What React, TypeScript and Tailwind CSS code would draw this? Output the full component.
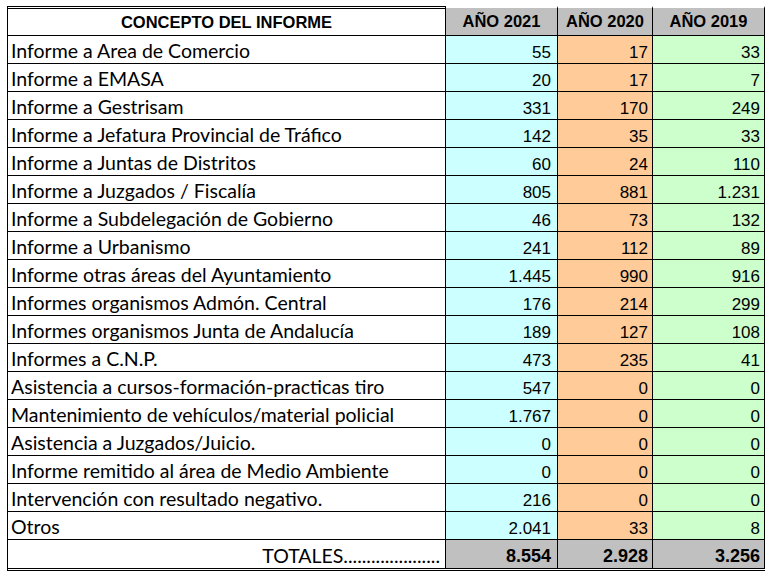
const rows: [string, string, string, string][] = [
  ['Informe a Area de Comercio', '55', '17', '33'],
  ['Informe a EMASA', '20', '17', '7'],
  ['Informe a Gestrisam', '331', '170', '249'],
  ['Informe a Jefatura Provincial de Tráfico', '142', '35', '33'],
  ['Informe a Juntas de Distritos', '60', '24', '110'],
  ['Informe a Juzgados / Fiscalía', '805', '881', '1.231'],
  ['Informe a Subdelegación de Gobierno', '46', '73', '132'],
  ['Informe a Urbanismo', '241', '112', '89'],
  ['Informe otras áreas del Ayuntamiento', '1.445', '990', '916'],
  ['Informes organismos Admón. Central', '176', '214', '299'],
  ['Informes organismos Junta de Andalucía', '189', '127', '108'],
  ['Informes a C.N.P.', '473', '235', '41'],
  ['Asistencia a cursos-formación-practicas tiro', '547', '0', '0'],
  ['Mantenimiento de vehículos/material policial', '1.767', '0', '0'],
  ['Asistencia a Juzgados/Juicio.', '0', '0', '0'],
  ['Informe remitido al área de Medio Ambiente', '0', '0', '0'],
  ['Intervención con resultado negativo.', '216', '0', '0'],
  ['Otros', '2.041', '33', '8'],
]

const arial = "font-['Liberation_Sans',Arial,sans-serif]"
const calibri = "font-['Lato','Noto_Sans',sans-serif]"

export default function App() {
  return (
    <div className="bg-white w-[773px] h-[580px] pl-[7px] pt-[6px] text-black">
      <div className="w-[758px] border-l border-black border-b-[3px] border-double">
        {/* header */}
        <div className={`grid grid-cols-[438px_112px_95px_112px] h-[30px] ${arial} font-bold text-[16.5px]`}>
          <div className="border-t-[3px] border-double border-black border-b border-r flex items-center justify-center">
            CONCEPTO DEL INFORME
          </div>
          <div className="border-t-2 border-t-white bg-[#c0c0c0] border-b border-r border-b-black border-r-black flex items-center justify-center">AÑO 2021</div>
          <div className="border-t-2 border-t-white bg-[#c0c0c0] border-b border-r border-b-black border-r-black flex items-center justify-center">AÑO 2020</div>
          <div className="border-t-2 border-t-white bg-[#c0c0c0] border-b border-r border-b-black border-r-black flex items-center justify-center">AÑO 2019</div>
        </div>

        {rows.map(([label, a, b, c]) => (
          <div key={label} className="grid grid-cols-[438px_112px_95px_112px] h-[28px]">
            <div className={`border-b border-r border-black flex items-end pl-[3px] pb-[3px] leading-none text-[19.5px] whitespace-nowrap ${calibri}`}>
              {label}
            </div>
            <div className={`bg-[#ccffff] border-b border-r border-black flex items-end justify-end pr-[6px] pb-[2px] leading-none text-[17px] ${arial}`}>{a}</div>
            <div className={`bg-[#ffcc99] border-b border-r border-black flex items-end justify-end pr-[4px] pb-[2px] leading-none text-[17px] ${arial}`}>{b}</div>
            <div className={`bg-[#ccffcc] border-b border-r border-black flex items-end justify-end pr-[4px] pb-[2px] leading-none text-[17px] ${arial}`}>{c}</div>
          </div>
        ))}

        {/* totals */}
        <div className="grid grid-cols-[438px_112px_95px_112px] h-[28px]">
          <div className={`border-r border-black flex items-end justify-end pr-[5px] pb-[3px] leading-none text-[19.5px] ${calibri}`}>
            TOTALES.....................
          </div>
          <div className={`bg-[#c0c0c0] border-r border-black flex items-end justify-end pr-[6px] pb-[3px] leading-none font-bold text-[18px] ${arial}`}>8.554</div>
          <div className={`bg-[#c0c0c0] border-r border-black flex items-end justify-end pr-[4px] pb-[3px] leading-none font-bold text-[18px] ${arial}`}>2.928</div>
          <div className={`bg-[#c0c0c0] border-r border-black flex items-end justify-end pr-[4px] pb-[3px] leading-none font-bold text-[18px] ${arial}`}>3.256</div>
        </div>
      </div>
    </div>
  )
}
